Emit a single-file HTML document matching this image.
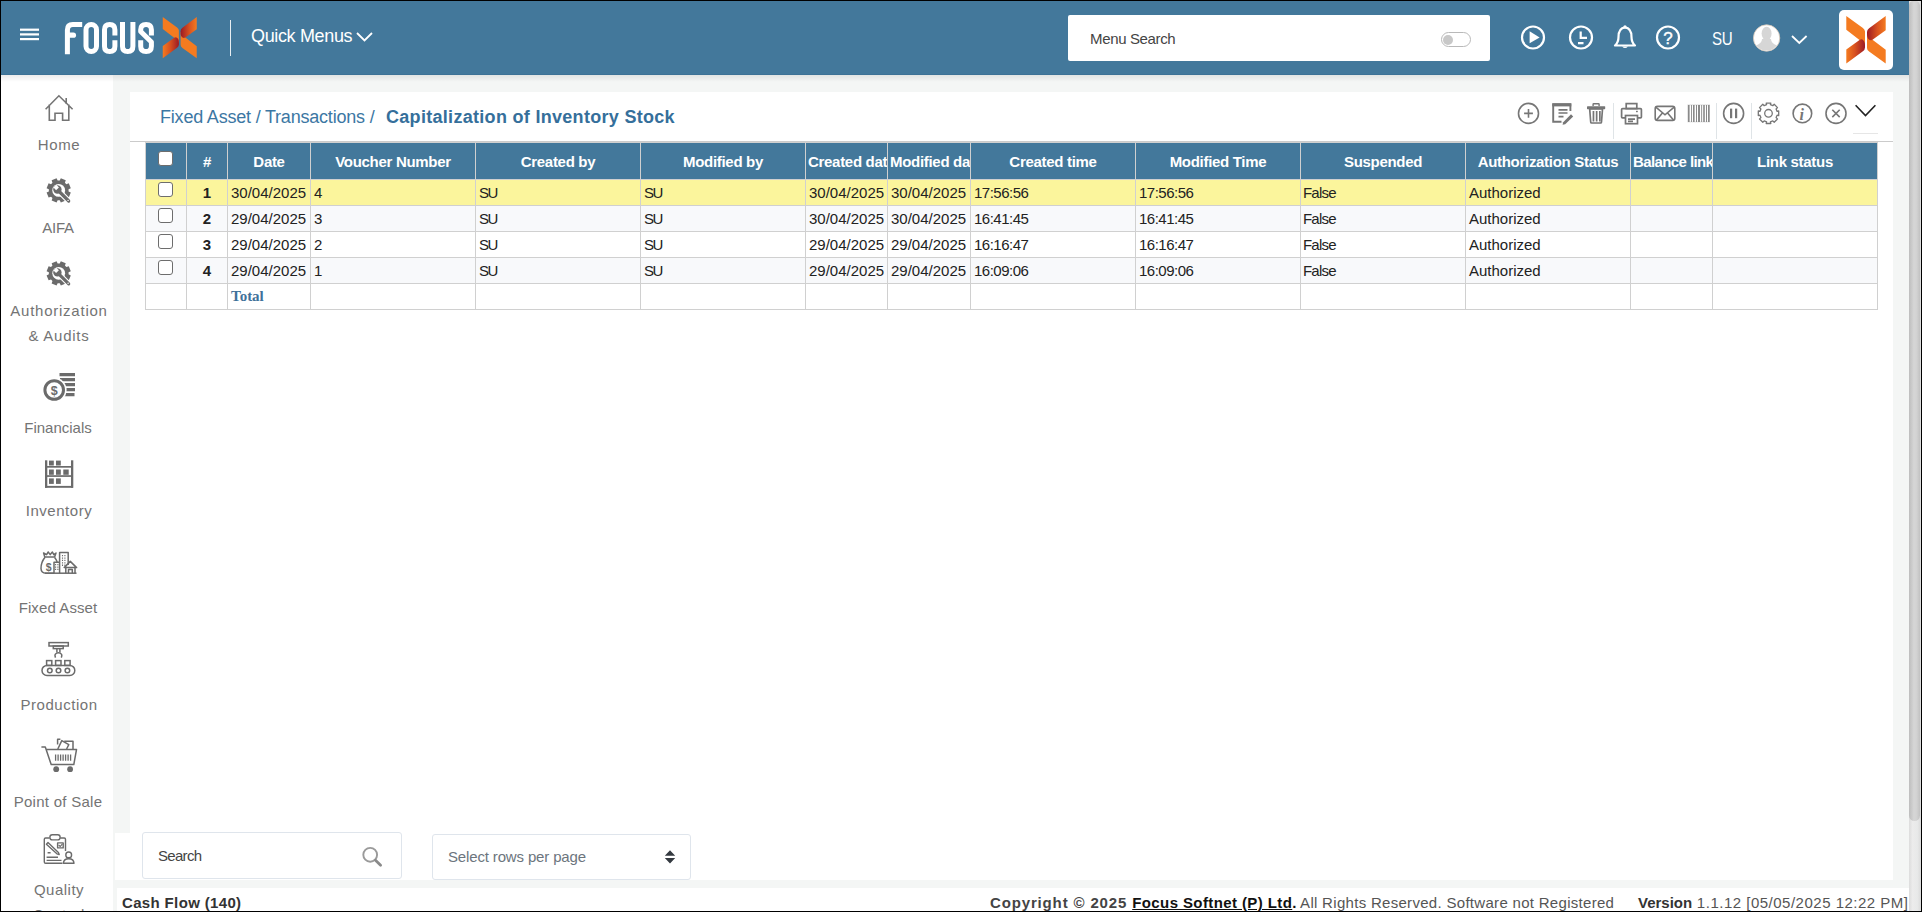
<!DOCTYPE html>
<html><head><meta charset="utf-8">
<style>
*{box-sizing:border-box;margin:0;padding:0}
html,body{width:1922px;height:912px;overflow:hidden;background:#000}
body{position:relative;font-family:"Liberation Sans",sans-serif;color:#222}
.abs{position:absolute}
#app{position:absolute;left:1px;top:1px;width:1908px;height:910px;background:#f4f6f5;overflow:hidden}
#hdr{position:absolute;left:1px;top:1px;width:1908px;height:74px;background:#43789b;border-bottom:1px solid #3d7296}
#hshadow{position:absolute;left:1px;top:75px;width:1908px;height:7px;background:linear-gradient(rgba(0,0,0,.075),rgba(0,0,0,0))}
#side{position:absolute;left:1px;top:75px;width:112px;height:836px;background:#fff}
.sbi{position:absolute;left:0;width:112px;text-align:center;color:#747474;font-size:15px;letter-spacing:0.6px;line-height:25px}
#card{position:absolute;left:130px;top:92px;width:1763px;height:788px;background:#fff}
#panel{position:absolute;left:115px;top:833px;width:1778px;height:47px;background:#fff}
#foot{position:absolute;left:117px;top:888px;width:1792px;height:23px;background:#fff}
#sb{position:absolute;left:1909px;top:1px;width:12px;height:910px;background:linear-gradient(90deg,#dcdcdc,#ececec 30%,#e8e9e9 70%,#dadada)}
#thumb{position:absolute;left:1909px;top:1px;width:11px;height:820px;border-radius:5px 5px 6px 6px;background:linear-gradient(90deg,#bdbdbd,#d6d6d6 45%,#d2d2d2 70%,#c2c2c2)}

.th{position:absolute;height:36px;background:#43789b;color:#fff;font-weight:700;font-size:15px;line-height:37px;text-align:center;white-space:nowrap;overflow:hidden;letter-spacing:-0.3px;padding:0 2px}
.td{position:absolute;font-size:15px;line-height:25px;padding-left:3px;white-space:nowrap;overflow:hidden;color:#222}
.td.num{font-weight:700;text-align:center;padding-left:0}
.td.tot{font-family:"Liberation Serif",serif;font-weight:700;color:#3f719a;font-size:15px}
.cb{position:absolute;width:14.5px;height:14.5px;border:1.4px solid #6d6d6d;border-radius:3px;background:#fff}
</style></head>
<body>
<div id="wrap" style="position:absolute;left:0;top:0;width:1921px;height:911px;overflow:hidden">
<div id="app"></div>
<div id="hdr"></div>
<div id="side"></div>
<div id="hshadow"></div>
<!-- header content -->
<svg class="abs" style="left:19px;top:27px" width="21" height="16" viewBox="0 0 21 16">
<rect x="1" y="1.6" width="19" height="2.2" fill="#fff"/><rect x="1" y="6.3" width="19" height="2.2" fill="#fff"/><rect x="1" y="11" width="19" height="2.2" fill="#fff"/>
</svg>
<svg class="abs" style="left:60px;top:14px" width="145" height="48" viewBox="60 14 145 48">
<defs>
<linearGradient id="gL" x1="0" y1="0" x2="1" y2="0"><stop offset="0" stop-color="#f47b20"/><stop offset="0.45" stop-color="#d9521f"/><stop offset="1" stop-color="#9c1a24"/></linearGradient>
<linearGradient id="gR" x1="1" y1="0" x2="0" y2="0"><stop offset="0" stop-color="#f47b20"/><stop offset="1" stop-color="#a51c24"/></linearGradient>
</defs>
<g fill="none" stroke="#fff" stroke-width="5" stroke-linejoin="round">
<path d="M67.4 54.2 V30 Q67.4 24.6 72.8 24.6 H82.2"/>
<path d="M69.5 35.2 H73.4" stroke-linecap="round" stroke-width="5.3"/>
<rect x="86" y="24.5" width="10.5" height="27" rx="5.25"/>
<path d="M114.9 35.5 V29.8 Q114.9 24.5 109.7 24.5 Q104.5 24.5 104.5 29.8 V46.2 Q104.5 51.5 109.7 51.5 Q114.9 51.5 114.9 46.2 V40.2"/>
<path d="M122.5 22 V46.2 Q122.5 51.5 127.7 51.5 Q132.9 51.5 132.9 46.2 V22"/>
<path d="M151.4 35.5 V29.8 Q151.4 24.5 146.1 24.5 Q140.7 24.5 140.7 29.8 V31.5 L151.4 42 V46.2 Q151.4 51.5 146.1 51.5 Q140.7 51.5 140.7 46.2 V40.2"/>
</g>
<g transform="translate(162.5 17) scale(0.8625 0.869)">
<g id="xl">
<path d="M0.3 0 L16.9 12 Q19 13.5 19 15.6 L19 30.5 L13.5 23.9 L0.3 13.8 Z" fill="#f47b20"/>
<path d="M0.3 33.4 L13.5 23.9 Q16.3 22.3 18.2 25.4 Q19 26.9 19 29.3 L19 31.6 Q19 33.8 16.9 35.3 L0.3 47.6 Z" fill="url(#gL)"/>
</g>
<use href="#xl" transform="rotate(180 20 23.8)"/>
</g>
</svg>
<div class="abs" style="left:230px;top:20px;width:1.3px;height:36px;background:#e8eef2"></div>
<div class="abs" style="left:251px;top:25px;font-size:18px;line-height:22px;color:#fff;letter-spacing:-0.35px;white-space:nowrap">Quick Menus</div>
<svg class="abs" style="left:355px;top:30px" width="20" height="14" viewBox="0 0 20 14"><polyline points="2,3 9.5,10.5 17,3" fill="none" stroke="#fff" stroke-width="1.8"/></svg>

<div class="abs" style="left:1068px;top:15px;width:422px;height:46px;background:#fff;border-radius:2px"></div>
<div class="abs" style="left:1090px;top:30px;font-size:15px;line-height:18px;color:#444;letter-spacing:-0.35px;white-space:nowrap">Menu Search</div>
<div class="abs" style="left:1441px;top:32px;width:30px;height:15px;border:1px solid #b9b9b9;border-radius:8px"></div>
<div class="abs" style="left:1443px;top:34.5px;width:10px;height:10px;background:#c8c8c8;border-radius:50%"></div>

<svg class="abs" style="left:1515px;top:20px" width="175" height="36" viewBox="1515 20 175 36">
<g fill="none" stroke="#fff" stroke-width="2.2">
<circle cx="1533" cy="37.5" r="11"/>
<circle cx="1581" cy="37.5" r="11"/>
<circle cx="1668" cy="37.5" r="11"/>
<path d="M1580.7 31.5 V37.8 H1587 M1578 43.2 H1583.5"/>
<path d="M1625 27.3 Q1618.5 28 1618.5 37 Q1618.5 42.5 1615 45.5 H1635 Q1631.5 42.5 1631.5 37 Q1631.5 28 1625 27.3 Z" stroke-linejoin="round"/>
</g>
<path d="M1529.6 31.2 L1539.6 37.5 L1529.6 43.3 Z" fill="#fff"/>
<circle cx="1625" cy="26.8" r="1.6" fill="#fff"/>
<path d="M1622 46.5 Q1625 49.5 1628 46.5 Z" fill="#fff"/>
<text x="1668" y="43.6" font-family="Liberation Sans" font-size="17" font-weight="400" fill="#fff" text-anchor="middle" stroke="#fff" stroke-width="0.4">?</text>
</svg>
<div class="abs" style="left:1711.5px;top:28px;font-size:18px;line-height:22px;color:#fff;letter-spacing:-0.3px;transform:scaleX(0.84);transform-origin:0 0;white-space:nowrap">SU</div>
<svg class="abs" style="left:1750px;top:21px" width="62" height="34" viewBox="1750 21 62 34">
<defs><clipPath id="av"><circle cx="1766.6" cy="38" r="12.6"/></clipPath></defs>
<circle cx="1766.6" cy="38" r="13.2" fill="#fff" stroke="#d8c8b8" stroke-width="0.8"/>
<g clip-path="url(#av)" fill="#d6d6d6">
<ellipse cx="1766.6" cy="33.5" rx="5" ry="6.8"/>
<path d="M1762 39 Q1762 43 1756 45.5 Q1753 47 1752 52 H1781 Q1780 47 1777 45.5 Q1771 43 1771 39 Z"/>
</g>
<polyline points="1792,36 1799.3,43 1806.6,36" fill="none" stroke="#fff" stroke-width="1.8"/>
</svg>
<div class="abs" style="left:1839px;top:10px;width:54px;height:60px;background:#fff;border-radius:5px"></div>
<svg class="abs" style="left:1846px;top:16px" width="40" height="48" viewBox="0 0 40 48">
<use href="#xl"/>
<use href="#xl" transform="rotate(180 20 23.8)"/>
</svg>


<!-- sidebar -->
<svg class="abs" style="left:1px;top:80px" width="112" height="831" viewBox="1 80 112 831">
<g fill="none" stroke="#747474" stroke-width="1.6">
<path d="M45.6 109.2 L58.9 95.8 L72.6 109.2 M66.2 98 V104 M49.3 104.5 V120.3 H55 V113.3 H62.6 V120.3 H68.8 V104.5"/>
</g>
<g transform="translate(58.7 190.4)">
<path d="M9.85 1.03 L12.11 2.14 L10.08 7.05 L7.69 6.23 L6.23 7.69 L7.05 10.08 L2.14 12.11 L1.03 9.85 L-1.03 9.85 L-2.14 12.11 L-7.05 10.08 L-6.23 7.69 L-7.69 6.23 L-10.08 7.05 L-12.11 2.14 L-9.85 1.03 L-9.85 -1.03 L-12.11 -2.14 L-10.08 -7.05 L-7.69 -6.23 L-6.23 -7.69 L-7.05 -10.08 L-2.14 -12.11 L-1.03 -9.85 L1.03 -9.85 L2.14 -12.11 L7.05 -10.08 L6.23 -7.69 L7.69 -6.23 L10.08 -7.05 L12.11 -2.14 L9.85 -1.03Z" fill="#6b6b6b"/>
<circle r="6.4" fill="#fff"/>
<path d="M1 1.6 L10 10.6" stroke="#fff" stroke-width="5.4" stroke-linecap="round"/>
<path d="M1 1.6 L10 10.6" stroke="#6b6b6b" stroke-width="3.2" stroke-linecap="round"/>
<circle cx="-1.3" cy="-0.9" r="4.2" fill="#6b6b6b"/>
<path d="M-5.2 -2.8 L-2.6 -0.2 L0.2 -3 L-2.4 -5.6 Z" fill="#fff"/>
<circle cx="9.4" cy="10" r="0.7" fill="#fff"/>
</g>
<g transform="translate(58.7 273.3)">
<path d="M9.85 1.03 L12.11 2.14 L10.08 7.05 L7.69 6.23 L6.23 7.69 L7.05 10.08 L2.14 12.11 L1.03 9.85 L-1.03 9.85 L-2.14 12.11 L-7.05 10.08 L-6.23 7.69 L-7.69 6.23 L-10.08 7.05 L-12.11 2.14 L-9.85 1.03 L-9.85 -1.03 L-12.11 -2.14 L-10.08 -7.05 L-7.69 -6.23 L-6.23 -7.69 L-7.05 -10.08 L-2.14 -12.11 L-1.03 -9.85 L1.03 -9.85 L2.14 -12.11 L7.05 -10.08 L6.23 -7.69 L7.69 -6.23 L10.08 -7.05 L12.11 -2.14 L9.85 -1.03Z" fill="#6b6b6b"/>
<circle r="6.4" fill="#fff"/>
<path d="M1 1.6 L10 10.6" stroke="#fff" stroke-width="5.4" stroke-linecap="round"/>
<path d="M1 1.6 L10 10.6" stroke="#6b6b6b" stroke-width="3.2" stroke-linecap="round"/>
<circle cx="-1.3" cy="-0.9" r="4.2" fill="#6b6b6b"/>
<path d="M-5.2 -2.8 L-2.6 -0.2 L0.2 -3 L-2.4 -5.6 Z" fill="#fff"/>
<circle cx="9.4" cy="10" r="0.7" fill="#fff"/>
</g>
<g>
<path d="M59.5 374.6 H75 M60 379.6 H75 M61 384.6 H75 M61 389.6 H75 M60.5 394.6 H74.5" stroke="#6b6b6b" stroke-width="3.3"/>
<circle cx="54.2" cy="390" r="12.4" fill="#fff"/>
<circle cx="54.2" cy="390" r="9.3" fill="none" stroke="#6b6b6b" stroke-width="3"/>
<text x="54.2" y="395" font-family="Liberation Sans" font-weight="700" font-size="12.5" fill="#6b6b6b" text-anchor="middle">$</text>
</g>
<g fill="#6b6b6b">
<rect x="45" y="460.3" width="2.3" height="27.5"/><rect x="71" y="460.3" width="2.3" height="27.5"/>
<rect x="45" y="466" width="28" height="1.7"/><rect x="45" y="475.2" width="28" height="1.7"/><rect x="45" y="485.9" width="28" height="1.9"/>
<rect x="49" y="460.6" width="4.8" height="4.9"/><rect x="56" y="460.6" width="4.8" height="4.9"/>
<rect x="49" y="469.5" width="4.8" height="5.3"/><rect x="56" y="469.5" width="4.8" height="5.3"/><rect x="63.3" y="469.5" width="5.4" height="5.3"/>
<rect x="49" y="478.4" width="4.8" height="5.5"/><rect x="56" y="478.4" width="4.8" height="5.5"/>
</g>
<g fill="none" stroke="#6b6b6b" stroke-width="1.5" stroke-linejoin="round">
<path d="M44.8 557 L43.6 553 L46.6 554.6 L48.2 552 L50.2 554.6 L52.4 552 L53.8 554.6 L56 553 L54.6 557 Z"/>
<path d="M45 557.2 Q40.8 562.5 41 568.5 Q41.2 573.2 46 573.2 H54"/>
<path d="M54.6 557.4 Q56.5 559.5 57.2 562"/>
<path d="M54 573.2 V562.3 H59.6 M59.6 573.2 V552.6 H68.2 V565"/>
<path d="M64.2 567.6 L70.3 561.4 L76.6 567.6 Z M65.8 567.6 V573.2 M75 567.6 V573.2 M68.5 573.2 V569.6 H72.3 V573.2"/>
<path d="M45 573.2 H76.5"/>
<path d="M55.6 564 V571 M57.9 564 V571 M62.5 555 V566 M64.9 555 V566" stroke-width="1.1" stroke-dasharray="1.3 1.1"/>
</g>
<text x="48.6" y="570.6" font-family="Liberation Sans" font-weight="700" font-size="10.5" fill="#6b6b6b" text-anchor="middle">$</text>
<g fill="none" stroke="#6b6b6b" stroke-width="1.5">
<rect x="49" y="642.6" width="19.3" height="3.4"/>
<rect x="53.3" y="646" width="9.9" height="2.6"/>
<path d="M56.9 648.6 V652.6 M59.9 648.6 V652.6"/>
<path d="M55.5 657.6 Q54.6 655.6 55.2 654.4 Q56.4 652.8 58.4 652.8 Q60.4 652.8 61.6 654.4 Q62.2 655.6 61.3 657.6"/>
<rect x="46.6" y="660.6" width="5.2" height="4.8"/><rect x="55.6" y="660.6" width="5.4" height="4.8"/><rect x="64.8" y="660.6" width="5.3" height="4.8"/>
<rect x="42" y="665.4" width="32.8" height="10" rx="5"/>
<circle cx="49.8" cy="670.5" r="2.3"/><circle cx="58.5" cy="670.5" r="2.3"/><circle cx="67.4" cy="670.5" r="2.3"/>
</g>
<g fill="none" stroke="#6b6b6b" stroke-width="1.5" stroke-linejoin="round">
<path d="M41.4 746.9 H45.3 L51.2 764.6 H73.8 L76.5 749.6 H46.2"/>
<path d="M55.6 754.6 V760.8 M58.1 754.6 V760.8 M60.6 754.6 V760.8 M63.1 754.6 V760.8 M65.6 754.6 V760.8 M68.1 754.6 V760.8 M70.6 754.6 V760.8" stroke-width="1.3"/>
<path d="M64.2 741.2 H73 V749.2"/>
<path d="M57.8 749 L61.8 740.6 L68.8 744.6 L66.6 749"/>
<path d="M57.6 744.5 V739.2 H60.4"/>
</g>
<circle cx="56.2" cy="769.2" r="2.9" fill="#6b6b6b"/><circle cx="70.1" cy="769.2" r="2.9" fill="#6b6b6b"/>
<g fill="none" stroke="#6b6b6b" stroke-width="1.4" stroke-linejoin="round">
<path d="M49.6 838 H45.6 Q44.3 838 44.3 839.3 V862 Q44.3 863.2 45.6 863.2 H62.5"/>
<path d="M60.2 838 H64.2 Q65.5 838 65.5 839.3 V851"/>
<rect x="49.9" y="834.7" width="10.2" height="5.2" rx="2.4"/>
<path d="M46.4 844.2 L48 842.6 L58.4 852.4 L59.2 854.6 L56.9 853.8 Z"/>
<rect x="57.6" y="842.9" width="5.6" height="5"/>
<path d="M58.6 845 L60.3 846.5 L62.4 843.8" stroke-width="1.1"/>
<path d="M46.6 857.2 H58 M46.6 860.4 H61.5 M47.6 852.8 H50.6"/>
<circle cx="68.7" cy="854.9" r="2.9"/>
<path d="M63.4 863.2 Q63.6 858.7 68.7 858.7 Q73.8 858.7 74 863.2 Z"/>
</g>
</svg>
<div class="sbi" style="left:3px;top:132px;letter-spacing:0.6px">Home</div>
<div class="sbi" style="left:2px;top:214.5px;letter-spacing:-0.3px">AIFA</div>
<div class="sbi" style="left:3px;top:298px;letter-spacing:0.75px">Authorization<br>&amp; Audits</div>
<div class="sbi" style="left:2px;top:415px;letter-spacing:0px">Financials</div>
<div class="sbi" style="left:3px;top:498px;letter-spacing:0.55px">Inventory</div>
<div class="sbi" style="left:2px;top:595px;letter-spacing:0.1px">Fixed Asset</div>
<div class="sbi" style="left:3px;top:691.5px;letter-spacing:0.55px">Production</div>
<div class="sbi" style="left:2px;top:789px;letter-spacing:0.27px">Point of Sale</div>
<div class="sbi" style="left:3px;top:876.5px;letter-spacing:0.5px">Quality<br>Control</div>

<div id="card"></div>

<div class="abs" style="left:160px;top:106px;font-size:18px;line-height:22px;color:#3c77a3;letter-spacing:-0.2px;white-space:nowrap">Fixed Asset / Transactions /</div>
<div class="abs" style="left:386px;top:106px;font-size:18px;line-height:22px;color:#356f9b;font-weight:700;letter-spacing:0.3px;white-space:nowrap">Capitalization of Inventory Stock</div>
<svg class="abs" style="left:1510px;top:98px" width="375" height="45" viewBox="1510 98 375 45">
<g fill="none" stroke="#767676" stroke-width="1.6">
<circle cx="1528.5" cy="113.4" r="10"/>
<path d="M1528.5 109 V117.8 M1524.1 113.4 H1532.9"/>
<path d="M1570.4 111 V104.5 H1553.2 V121.8 H1561.5" stroke-width="1.9"/>
<path d="M1558.5 109.8 H1567.5 M1558.5 113 H1567.5 M1558.5 116.6 H1563.5" stroke-width="1.7"/>
<circle cx="1733.6" cy="113.4" r="10"/>
<circle cx="1802.4" cy="113.4" r="9.3"/>
<circle cx="1836" cy="113.4" r="10"/>
<path d="M1832.3 109.7 L1839.7 117.1 M1839.7 109.7 L1832.3 117.1"/>
<rect x="1655.2" y="106.4" width="19.6" height="14" rx="2.2"/>
<path d="M1655.8 107.2 L1665 114.8 L1674.2 107.2 M1656.5 120 L1662.2 113.2 M1673.5 120 L1667.8 113.2"/>
</g>
<rect x="1552.3" y="103.2" width="19" height="3.2" fill="#767676"/>
<path d="M1571 114.2 L1573.2 116.4 L1565.2 124.2 L1562.6 124.8 L1563.2 122.2 Z" fill="#767676"/>
<g fill="#767676">
<rect x="1587" y="106.2" width="18.2" height="3" rx="0.6"/>
<path d="M1592.4 106 V104.3 Q1592.4 103 1593.7 103 H1598.5 Q1599.8 103 1599.8 104.3 V106 H1598.4 V104.4 H1593.8 V106 Z"/>
<path d="M1588.8 108.4 H1603.4 L1602.3 122.2 Q1602.2 123.8 1600.6 123.8 H1591.6 Q1590 123.8 1589.9 122.2 Z M1590.6 109.8 L1591.5 121.8 Q1591.6 122.3 1592 122.3 H1600.2 Q1600.6 122.3 1600.7 121.8 L1601.6 109.8 Z"/>
<rect x="1592.6" y="111" width="1.7" height="10.5"/><rect x="1595.8" y="111" width="1.7" height="10.5"/><rect x="1599" y="111" width="1.7" height="10.5"/>
</g>
<g fill="none" stroke="#767676" stroke-width="1.7">
<rect x="1626.2" y="103.6" width="10.6" height="5"/>
<path d="M1625.5 117.8 H1622.5 Q1621.6 117.8 1621.6 116.9 V109.6 Q1621.6 108.6 1622.6 108.6 H1640.5 Q1641.4 108.6 1641.4 109.6 V116.9 Q1641.4 117.8 1640.5 117.8 H1637.5"/>
<rect x="1625.5" y="115.5" width="12" height="8.2"/>
<path d="M1628 119.2 H1635 M1628 121.4 H1633"/>
</g>
<rect x="1636" y="110.8" width="1.8" height="1.4" fill="#767676"/>
<rect x="1687.8" y="104.9" width="21.8" height="17" fill="none" stroke="#d8d8d8" stroke-width="0.8"/>
<g fill="#8a8a8a">
<rect x="1688" y="105" width="1.6" height="17"/><rect x="1691" y="105" width="0.9" height="17"/><rect x="1693" y="105" width="1.6" height="17"/><rect x="1696" y="105" width="1" height="17"/><rect x="1698" y="105" width="2" height="17"/><rect x="1701.2" y="105" width="0.9" height="17"/><rect x="1703.2" y="105" width="1.6" height="17"/><rect x="1706" y="105" width="1" height="17"/><rect x="1708" y="105" width="1.6" height="17"/>
</g>
<rect x="1730" y="108.6" width="2.2" height="9.6" fill="#767676"/><rect x="1735" y="108.6" width="2.2" height="9.6" fill="#767676"/>
<text x="1801.8" y="119.5" font-family="Liberation Serif" font-style="italic" font-weight="700" font-size="16" fill="#767676" text-anchor="middle">i</text>
<g transform="translate(1768.5 113.3)">
<path d="M8.6 1.9 L10.2 2.3 L10.2 -2.3 L8.6 -1.9 L7.6 -4.3 L9 -5.7 L5.7 -9 L4.3 -7.6 L1.9 -8.6 L2.3 -10.2 L-2.3 -10.2 L-1.9 -8.6 L-4.3 -7.6 L-5.7 -9 L-9 -5.7 L-7.6 -4.3 L-8.6 -1.9 L-10.2 -2.3 L-10.2 2.3 L-8.6 1.9 L-7.6 4.3 L-9 5.7 L-5.7 9 L-4.3 7.6 L-1.9 8.6 L-2.3 10.2 L2.3 10.2 L1.9 8.6 L4.3 7.6 L5.7 9 L9 5.7 L7.6 4.3 Z" fill="none" stroke="#767676" stroke-width="1.3" stroke-linejoin="round"/>
<circle r="3.8" fill="none" stroke="#767676" stroke-width="1.3"/>
</g>
<polyline points="1855.6,105.3 1865.5,115.5 1875.4,105.3" fill="none" stroke="#222" stroke-width="1.6"/>
</svg>
<div class="abs" style="left:1613px;top:103px;width:1px;height:36px;background:#dfe4e7"></div>
<div class="abs" style="left:1716px;top:103px;width:1px;height:36px;background:#dfe4e7"></div>
<div class="abs" style="left:1751px;top:103px;width:1px;height:36px;background:#dfe4e7"></div>
<div class="abs" style="left:1853px;top:133px;width:25px;height:1px;background:#e6e6e6"></div>
<div class="abs" style="left:130px;top:141px;width:1763px;height:1px;background:#cbcbcb"></div>
<div class="abs" style="left:145px;top:142px;width:1733px;height:168px;background:#d0d0d0"></div>
<div class="th" style="left:146px;top:143px;width:40px;"></div>
<div class="th" style="left:187px;top:143px;width:40px;">#</div>
<div class="th" style="left:228px;top:143px;width:82px;">Date</div>
<div class="th" style="left:311px;top:143px;width:164px;">Voucher Number</div>
<div class="th" style="left:476px;top:143px;width:164px;">Created by</div>
<div class="th" style="left:641px;top:143px;width:164px;">Modified by</div>
<div class="th" style="left:806px;top:143px;width:81px;">Created dat</div>
<div class="th" style="left:888px;top:143px;width:82px;">Modified da</div>
<div class="th" style="left:971px;top:143px;width:164px;">Created time</div>
<div class="th" style="left:1136px;top:143px;width:164px;">Modified Time</div>
<div class="th" style="left:1301px;top:143px;width:164px;">Suspended</div>
<div class="th" style="left:1466px;top:143px;width:164px;">Authorization Status</div>
<div class="th" style="left:1631px;top:143px;width:81px;letter-spacing:-0.6px;">Balance link</div>
<div class="th" style="left:1713px;top:143px;width:164px;">Link status</div>
<div class="cb" style="left:158px;top:151px"></div>
<div class="td" style="left:146px;top:180px;width:40px;height:25px;background:#fbf59c;"></div>
<div class="td num" style="left:187px;top:180px;width:40px;height:25px;background:#fbf59c;">1</div>
<div class="td" style="left:228px;top:180px;width:82px;height:25px;background:#fbf59c;">30/04/2025</div>
<div class="td" style="left:311px;top:180px;width:164px;height:25px;background:#fbf59c;">4</div>
<div class="td" style="left:476px;top:180px;width:164px;height:25px;background:#fbf59c;letter-spacing:-1.4px;">SU</div>
<div class="td" style="left:641px;top:180px;width:164px;height:25px;background:#fbf59c;letter-spacing:-1.4px;">SU</div>
<div class="td" style="left:806px;top:180px;width:81px;height:25px;background:#fbf59c;">30/04/2025</div>
<div class="td" style="left:888px;top:180px;width:82px;height:25px;background:#fbf59c;">30/04/2025</div>
<div class="td" style="left:971px;top:180px;width:164px;height:25px;background:#fbf59c;letter-spacing:-0.5px;">17:56:56</div>
<div class="td" style="left:1136px;top:180px;width:164px;height:25px;background:#fbf59c;letter-spacing:-0.5px;">17:56:56</div>
<div class="td" style="left:1301px;top:180px;width:164px;height:25px;background:#fbf59c;letter-spacing:-0.8px;padding-left:2px;">False</div>
<div class="td" style="left:1466px;top:180px;width:164px;height:25px;background:#fbf59c;">Authorized</div>
<div class="td" style="left:1631px;top:180px;width:81px;height:25px;background:#fbf59c;"></div>
<div class="td" style="left:1713px;top:180px;width:164px;height:25px;background:#fbf59c;"></div>
<div class="cb" style="left:158px;top:182px"></div>
<div class="td" style="left:146px;top:206px;width:40px;height:25px;background:#f8f9fb;"></div>
<div class="td num" style="left:187px;top:206px;width:40px;height:25px;background:#f8f9fb;">2</div>
<div class="td" style="left:228px;top:206px;width:82px;height:25px;background:#f8f9fb;">29/04/2025</div>
<div class="td" style="left:311px;top:206px;width:164px;height:25px;background:#f8f9fb;">3</div>
<div class="td" style="left:476px;top:206px;width:164px;height:25px;background:#f8f9fb;letter-spacing:-1.4px;">SU</div>
<div class="td" style="left:641px;top:206px;width:164px;height:25px;background:#f8f9fb;letter-spacing:-1.4px;">SU</div>
<div class="td" style="left:806px;top:206px;width:81px;height:25px;background:#f8f9fb;">30/04/2025</div>
<div class="td" style="left:888px;top:206px;width:82px;height:25px;background:#f8f9fb;">30/04/2025</div>
<div class="td" style="left:971px;top:206px;width:164px;height:25px;background:#f8f9fb;letter-spacing:-0.5px;">16:41:45</div>
<div class="td" style="left:1136px;top:206px;width:164px;height:25px;background:#f8f9fb;letter-spacing:-0.5px;">16:41:45</div>
<div class="td" style="left:1301px;top:206px;width:164px;height:25px;background:#f8f9fb;letter-spacing:-0.8px;padding-left:2px;">False</div>
<div class="td" style="left:1466px;top:206px;width:164px;height:25px;background:#f8f9fb;">Authorized</div>
<div class="td" style="left:1631px;top:206px;width:81px;height:25px;background:#f8f9fb;"></div>
<div class="td" style="left:1713px;top:206px;width:164px;height:25px;background:#f8f9fb;"></div>
<div class="cb" style="left:158px;top:208px"></div>
<div class="td" style="left:146px;top:232px;width:40px;height:25px;background:#ffffff;"></div>
<div class="td num" style="left:187px;top:232px;width:40px;height:25px;background:#ffffff;">3</div>
<div class="td" style="left:228px;top:232px;width:82px;height:25px;background:#ffffff;">29/04/2025</div>
<div class="td" style="left:311px;top:232px;width:164px;height:25px;background:#ffffff;">2</div>
<div class="td" style="left:476px;top:232px;width:164px;height:25px;background:#ffffff;letter-spacing:-1.4px;">SU</div>
<div class="td" style="left:641px;top:232px;width:164px;height:25px;background:#ffffff;letter-spacing:-1.4px;">SU</div>
<div class="td" style="left:806px;top:232px;width:81px;height:25px;background:#ffffff;">29/04/2025</div>
<div class="td" style="left:888px;top:232px;width:82px;height:25px;background:#ffffff;">29/04/2025</div>
<div class="td" style="left:971px;top:232px;width:164px;height:25px;background:#ffffff;letter-spacing:-0.5px;">16:16:47</div>
<div class="td" style="left:1136px;top:232px;width:164px;height:25px;background:#ffffff;letter-spacing:-0.5px;">16:16:47</div>
<div class="td" style="left:1301px;top:232px;width:164px;height:25px;background:#ffffff;letter-spacing:-0.8px;padding-left:2px;">False</div>
<div class="td" style="left:1466px;top:232px;width:164px;height:25px;background:#ffffff;">Authorized</div>
<div class="td" style="left:1631px;top:232px;width:81px;height:25px;background:#ffffff;"></div>
<div class="td" style="left:1713px;top:232px;width:164px;height:25px;background:#ffffff;"></div>
<div class="cb" style="left:158px;top:234px"></div>
<div class="td" style="left:146px;top:258px;width:40px;height:25px;background:#f8f9fb;"></div>
<div class="td num" style="left:187px;top:258px;width:40px;height:25px;background:#f8f9fb;">4</div>
<div class="td" style="left:228px;top:258px;width:82px;height:25px;background:#f8f9fb;">29/04/2025</div>
<div class="td" style="left:311px;top:258px;width:164px;height:25px;background:#f8f9fb;">1</div>
<div class="td" style="left:476px;top:258px;width:164px;height:25px;background:#f8f9fb;letter-spacing:-1.4px;">SU</div>
<div class="td" style="left:641px;top:258px;width:164px;height:25px;background:#f8f9fb;letter-spacing:-1.4px;">SU</div>
<div class="td" style="left:806px;top:258px;width:81px;height:25px;background:#f8f9fb;">29/04/2025</div>
<div class="td" style="left:888px;top:258px;width:82px;height:25px;background:#f8f9fb;">29/04/2025</div>
<div class="td" style="left:971px;top:258px;width:164px;height:25px;background:#f8f9fb;letter-spacing:-0.5px;">16:09:06</div>
<div class="td" style="left:1136px;top:258px;width:164px;height:25px;background:#f8f9fb;letter-spacing:-0.5px;">16:09:06</div>
<div class="td" style="left:1301px;top:258px;width:164px;height:25px;background:#f8f9fb;letter-spacing:-0.8px;padding-left:2px;">False</div>
<div class="td" style="left:1466px;top:258px;width:164px;height:25px;background:#f8f9fb;">Authorized</div>
<div class="td" style="left:1631px;top:258px;width:81px;height:25px;background:#f8f9fb;"></div>
<div class="td" style="left:1713px;top:258px;width:164px;height:25px;background:#f8f9fb;"></div>
<div class="cb" style="left:158px;top:260px"></div>
<div class="td" style="left:146px;top:284px;width:40px;height:25px;background:#ffffff;"></div>
<div class="td" style="left:187px;top:284px;width:40px;height:25px;background:#ffffff;"></div>
<div class="td tot" style="left:228px;top:284px;width:82px;height:25px;background:#ffffff;">Total</div>
<div class="td" style="left:311px;top:284px;width:164px;height:25px;background:#ffffff;"></div>
<div class="td" style="left:476px;top:284px;width:164px;height:25px;background:#ffffff;"></div>
<div class="td" style="left:641px;top:284px;width:164px;height:25px;background:#ffffff;"></div>
<div class="td" style="left:806px;top:284px;width:81px;height:25px;background:#ffffff;"></div>
<div class="td" style="left:888px;top:284px;width:82px;height:25px;background:#ffffff;"></div>
<div class="td" style="left:971px;top:284px;width:164px;height:25px;background:#ffffff;"></div>
<div class="td" style="left:1136px;top:284px;width:164px;height:25px;background:#ffffff;"></div>
<div class="td" style="left:1301px;top:284px;width:164px;height:25px;background:#ffffff;"></div>
<div class="td" style="left:1466px;top:284px;width:164px;height:25px;background:#ffffff;"></div>
<div class="td" style="left:1631px;top:284px;width:81px;height:25px;background:#ffffff;"></div>
<div class="td" style="left:1713px;top:284px;width:164px;height:25px;background:#ffffff;"></div>
<div id="panel"></div>
<div id="foot"></div>

<div class="abs" style="left:142px;top:832px;width:260px;height:47px;border:1px solid #dfe5ec;border-radius:3px;background:#fff"></div>
<div class="abs" style="left:158px;top:847px;font-size:15px;line-height:18px;color:#444;letter-spacing:-0.7px;white-space:nowrap">Search</div>
<svg class="abs" style="left:360px;top:845px" width="25" height="24" viewBox="360 845 25 24">
<circle cx="370.2" cy="854.8" r="6.9" fill="none" stroke="#9a9a9a" stroke-width="1.9"/>
<path d="M375.5 860.2 L380.6 865.3" stroke="#8a8a8a" stroke-width="2.8" stroke-linecap="round"/>
</svg>
<div class="abs" style="left:432px;top:834px;width:259px;height:46px;border:1px solid #dfe5ec;border-radius:3px;background:#fff"></div>
<div class="abs" style="left:448px;top:848px;font-size:15px;line-height:18px;color:#6c757d;letter-spacing:-0.15px;white-space:nowrap">Select rows per page</div>
<svg class="abs" style="left:662px;top:848px" width="16" height="18" viewBox="662 848 16 18"><path d="M664.8 855.8 H675.2 L670 850.2 Z M664.8 858 H675.2 L670 863.5 Z" fill="#343a40"/></svg>
<div class="abs" style="left:122px;top:894px;font-size:15px;line-height:18px;color:#333;font-weight:700;letter-spacing:0.35px;white-space:nowrap">Cash Flow (140)</div>
<div class="abs" style="left:990px;top:894px;font-size:15px;line-height:18px;color:#555;white-space:nowrap"><b style="color:#444;letter-spacing:0.85px">Copyright © 2025 </b><b style="color:#111;text-decoration:underline;letter-spacing:0.4px">Focus Softnet (P) Ltd</b><b style="color:#111">.</b><span style="letter-spacing:0.3px"> All Rights Reserved. Software not Registered</span></div>
<div class="abs" style="left:1638px;top:894px;font-size:15px;line-height:18px;color:#555;white-space:nowrap"><b style="color:#333">Version</b><span style="letter-spacing:0.5px"> 1.1.12 [05/05/2025 12:22 PM]</span></div>

<div id="sb"></div>
<div id="thumb"></div>
</div>
</body></html>
